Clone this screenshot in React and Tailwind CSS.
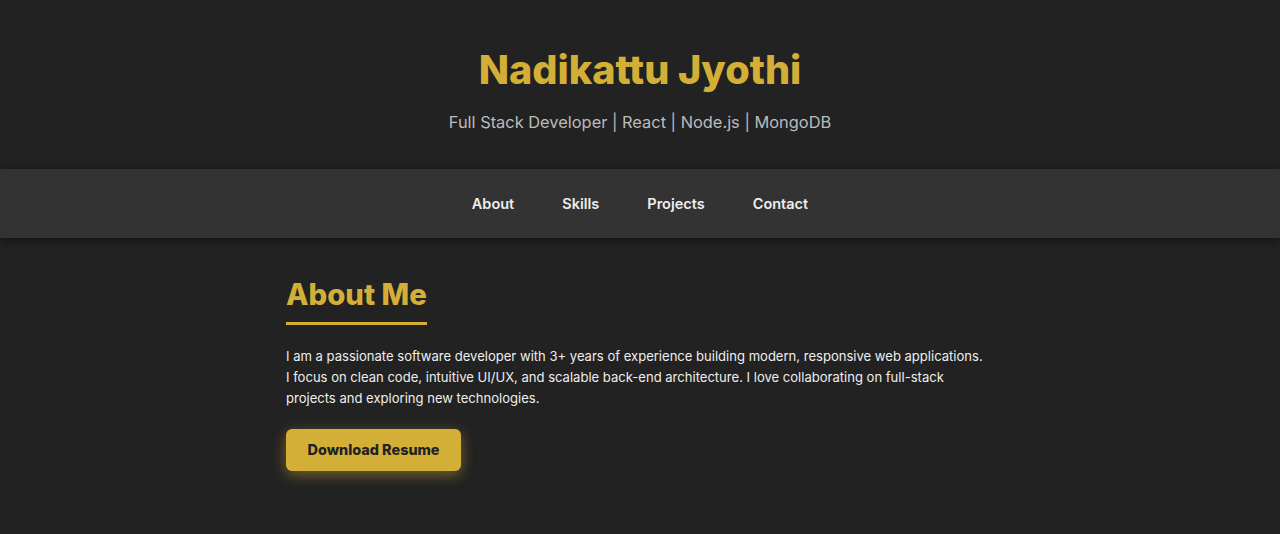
import React from 'react';

const navItems = ['About', 'Skills', 'Projects', 'Contact'];

const App = () => {
  return (
    <div className="min-h-screen bg-[#222222] font-['Inter',sans-serif] text-[#eeeeee]">
      {/* Header */}
      <header className="pt-[46px] pb-[34px] text-center">
        <h1 className="text-[39.6px] font-extrabold leading-[48px] text-[#d4af37]">Nadikattu Jyothi</h1>
        <p className="mt-[16px] text-[16.4px] leading-[25px] text-[#bbbbbb]">
          Full Stack Developer | React | Node.js | MongoDB
        </p>
      </header>

      {/* Nav */}
      <nav className="flex h-[69px] items-center justify-center gap-12 bg-[#333333] shadow-[0_2px_10px_rgba(0,0,0,0.5)]">
        {navItems.map((item) => (
          <a key={item} href="#" className="text-[14.5px] font-semibold text-[#eeeeee]">
            {item}
          </a>
        ))}
      </nav>

      {/* About */}
      <section className="mx-auto w-[708px] pt-[40px] pb-12">
        <h2 className="inline-block border-b-[3px] border-[#d4af37] pb-[10px] text-[29.3px] font-extrabold leading-[34px] text-[#d4af37]">
          About Me
        </h2>
        <p className="mt-[21px] max-w-[701px] text-[13.05px] leading-[21px] text-[#eeeeee]">
          I am a passionate software developer with 3+ years of experience building modern, responsive web applications.
          I focus on clean code, intuitive UI/UX, and scalable back-end architecture. I love collaborating on full-stack
          projects and exploring new technologies.
        </p>
        <button className="mt-[20px] h-[42px] rounded-md bg-[#d4af37] px-[21.5px] text-[14.4px] font-extrabold text-[#222222] shadow-[0_4px_14px_rgba(212,175,55,0.45)]">
          Download Resume
        </button>
      </section>
    </div>
  );
};

export default App;
